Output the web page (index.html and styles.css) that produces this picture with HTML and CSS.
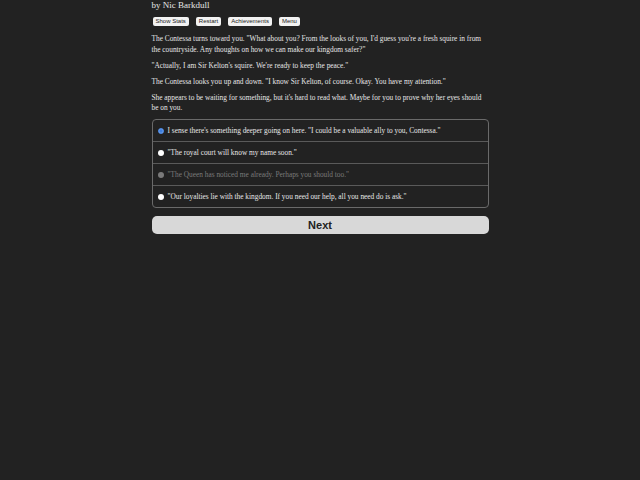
FILE: index.html
```html
<!DOCTYPE html>
<html lang="en">
<head>
  <meta charset="UTF-8" />
  <meta name="viewport" content="width=device-width, initial-scale=1.0" />
  <title>The Contessa</title>
  <link rel="stylesheet" href="styles.css">
</head>
<body>
  <div class="container">
    <div class="author">by Nic Barkdull</div>

    <div class="buttons">
      <button class="small-btn">Show Stats</button>
      <button class="small-btn">Restart</button>
      <button class="small-btn">Achievements</button>
      <button class="small-btn">Menu</button>
    </div>

    <div class="text">
      <p>The Contessa turns toward you. "What about you? From the looks of you, I'd guess you're a fresh squire in from the countryside. Any thoughts on how we can make our kingdom safer?"</p>
      <p>"Actually, I am Sir Kelton's squire. We're ready to keep the peace."</p>
      <p>The Contessa looks you up and down. "I know Sir Kelton, of course. Okay. You have my attention."</p>
      <p>She appears to be waiting for something, but it's hard to read what. Maybe for you to prove why her eyes should be on you.</p>
    </div>

    <form class="choices">
      <label class="choice">
        <input type="radio" name="choice" checked>
        <span>I sense there's something deeper going on here. "I could be a valuable ally to you, Contessa."</span>
      </label>
      <label class="choice">
        <input type="radio" name="choice">
        <span>"The royal court will know my name soon."</span>
      </label>
      <label class="choice disabled">
        <input type="radio" name="choice" disabled>
        <span>"The Queen has noticed me already. Perhaps you should too."</span>
      </label>
      <label class="choice">
        <input type="radio" name="choice">
        <span>"Our loyalties lie with the kingdom. If you need our help, all you need do is ask."</span>
      </label>
    </form>

    <button class="next">Next</button>
  </div>
</body>
</html>
```

FILE: styles.css
```css
body {
  margin: 0;
  background-color: #222222;
  color: #e6e6e6;
  font-family: "Liberation Serif", "DejaVu Serif", serif;
}
.container {
  width: 337px;
  margin: 0 auto;
}
.author {
  font-size: 9px;
  line-height: 11px;
}
.buttons {
  display: flex;
  gap: 7px;
  margin-top: 6px;
  padding-left: 1px;
}
.small-btn {
  font-family: "Liberation Sans", Arial, sans-serif;
  font-size: 6px;
  line-height: 7px;
  padding: 1px 3px;
  background-color: #f2f2f2;
  color: #222222;
  border: none;
  border-radius: 2px;
}
.text {
  margin-top: 8px;
  font-size: 7.35px;
  line-height: 10.5px;
}
.text p {
  margin: 0 0 5.5px 0;
}
.choices {
  margin-top: 5px;
  border: 1px solid #6a6a6a;
  border-radius: 4px;
  overflow: hidden;
}
.choice {
  display: flex;
  align-items: center;
  gap: 4px;
  height: 21px;
  padding: 0 5px;
  font-size: 7.35px;
  border-top: 1px solid #5a5a5a;
}
.choice:first-child {
  border-top: none;
}
.choice input {
  appearance: none;
  margin: 0;
  width: 6px;
  height: 6px;
  border-radius: 50%;
  background-color: #ffffff;
  flex-shrink: 0;
}
.choice input:checked {
  background-color: #ffffff;
  border: 1.5px solid #3d7fe0;
  box-sizing: border-box;
  box-shadow: inset 0 0 0 2px #3d7fe0;
}
.choice.disabled {
  color: #7a7a7a;
}
.choice.disabled input {
  background-color: #7a7a7a;
}
.next {
  display: block;
  width: 100%;
  margin-top: 8px;
  height: 18px;
  background-color: #d8d8d8;
  color: #222222;
  border: none;
  border-radius: 5px;
  font-family: "Liberation Sans", Arial, sans-serif;
  font-weight: bold;
  font-size: 11px;
}
```
